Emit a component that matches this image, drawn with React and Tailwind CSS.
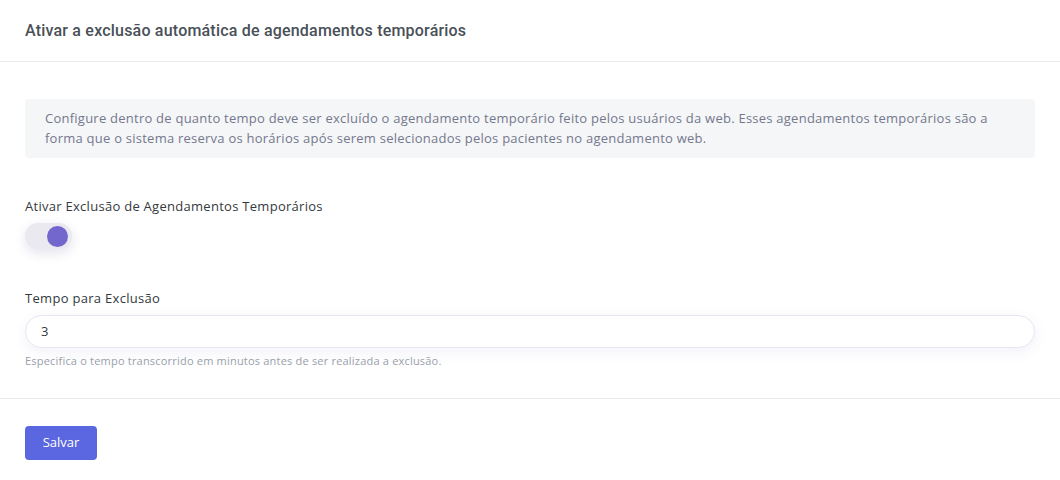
import React from "react";

export default function App() {
  return (
    <div className="w-[1060px] h-[480px] bg-white font-['Open_Sans',sans-serif] text-[#495057]">
      <div className="h-[62px] border-b border-[#e9ebef] px-[25px] flex items-center">
        <h4 className="font-['Roboto',sans-serif] font-medium text-[16px] text-[#495057] tracking-[0.2px]">
          Ativar a exclusão automática de agendamentos temporários
        </h4>
      </div>

      <div className="px-[25px] pt-[37px] pb-[29px]">
        <div className="bg-[#f5f6f8] rounded-[4px] px-[20px] pt-[10px] pb-[10px] text-[13px] leading-[19.5px] text-[#74788d] tracking-[0.24px]">
          Configure dentro de quanto tempo deve ser excluído o agendamento temporário feito pelos usuários da web. Esses agendamentos temporários são a forma que o sistema reserva os horários após serem selecionados pelos pacientes no agendamento web.
        </div>

        <div className="mt-[38px] text-[13px] text-[#343a40] leading-[20px] tracking-[0.28px]">
          Ativar Exclusão de Agendamentos Temporários
        </div>
        <div className="mt-[7px] w-[47px] h-[26px] rounded-full bg-[#e9e9ef] shadow-[0_4px_12px_rgba(70,70,140,0.15)] flex items-center justify-end pr-[4px]">
          <div className="w-[21px] h-[21px] rounded-full bg-[#7367cd]" />
        </div>

        <div className="mt-[39px] text-[13px] text-[#343a40] leading-[20px] tracking-[0.3px]">
          Tempo para Exclusão
        </div>
        <div className="mt-[7px] h-[33px] rounded-full border border-[#e6e6f0] bg-white shadow-[0_4px_14px_rgba(90,90,180,0.08)] flex items-center px-[15px] text-[13px] text-[#343a40]">
          3
        </div>
        <div className="mt-[5px] text-[11px] text-[#98a0ab] leading-[16px] tracking-[0.2px]">
          Especifica o tempo transcorrido em minutos antes de ser realizada a exclusão.
        </div>
      </div>

      <div className="border-t border-[#e9ebef] px-[25px] pt-[27px]">
        <button className="w-[72px] h-[34px] rounded-[4px] bg-[#5b67e0] text-white text-[13px] font-medium">
          Salvar
        </button>
      </div>
    </div>
  );
}
